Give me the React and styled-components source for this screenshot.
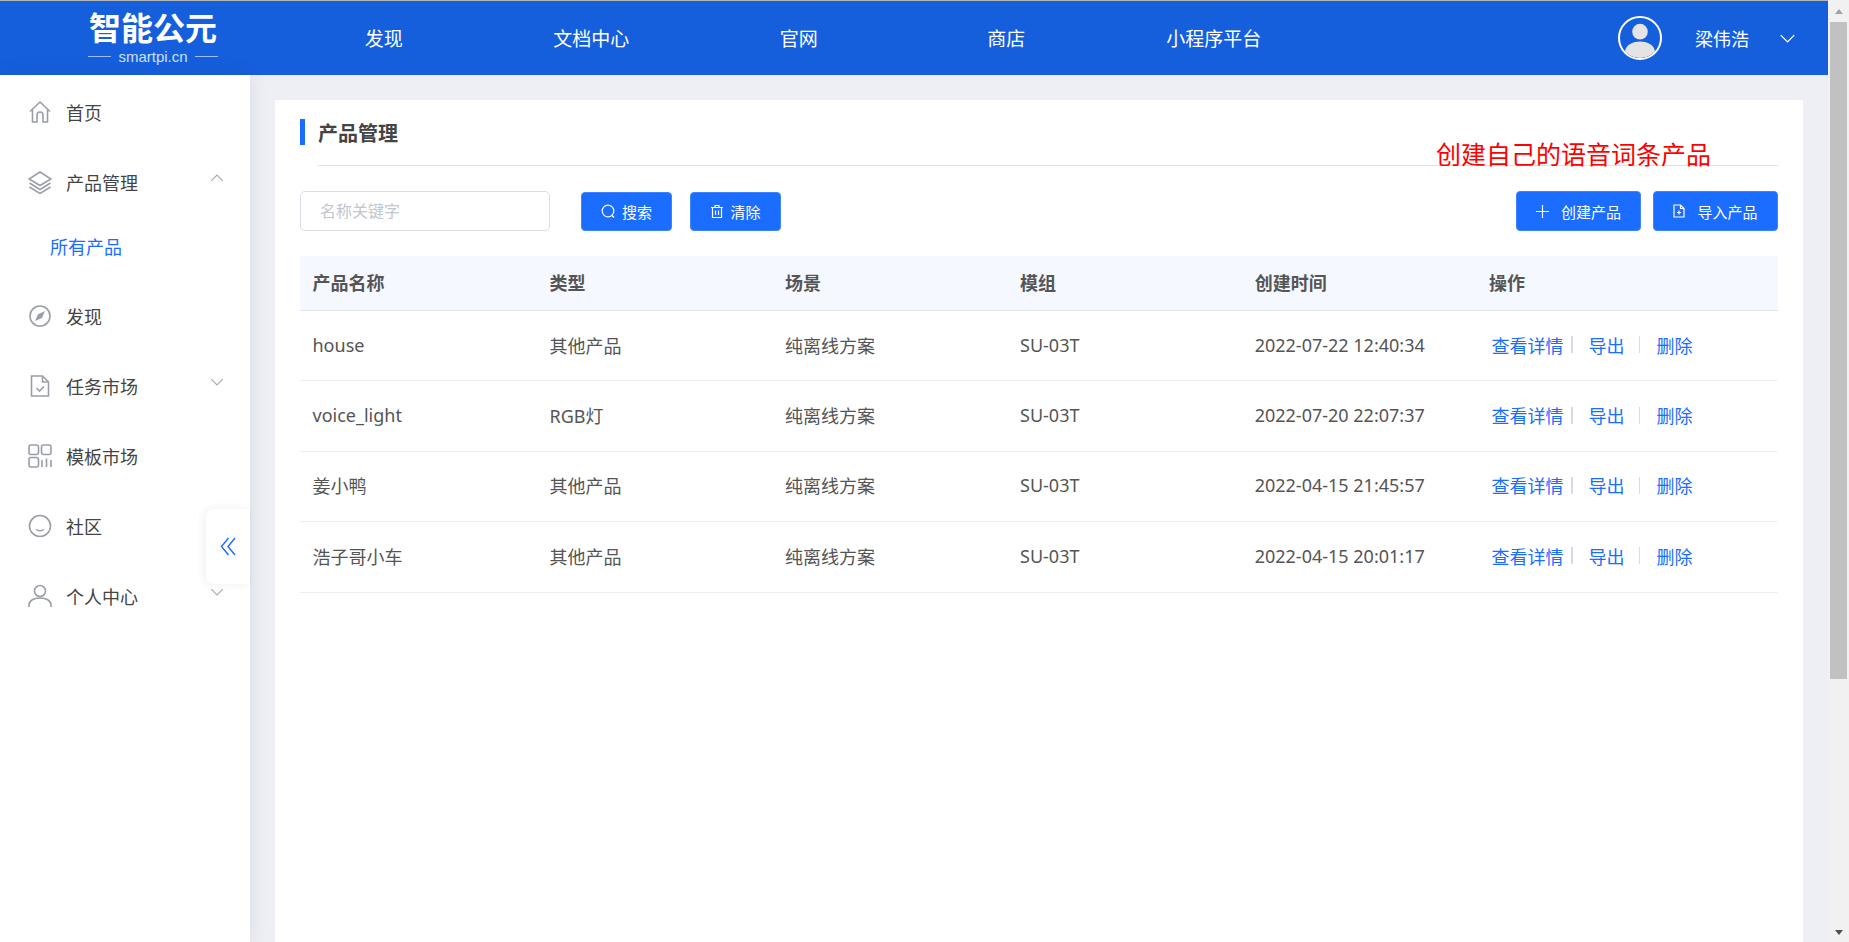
import React from "react";
import styled, { createGlobalStyle } from "styled-components";

const GlobalStyle = createGlobalStyle`
    html, body {
        margin: 0;
        height: 100%;
        overflow: hidden;
        background: #eeeff5;
        font-family: "Noto Sans", "Noto Sans CJK SC", "Liberation Sans", sans-serif;
    }
    #root { height: 100%; }
    * { box-sizing: border-box; }
`;

const navItems = ["发现", "文档中心", "官网", "商店", "小程序平台"];

const rows = [
    { name: "house", type: "其他产品", time: "2022-07-22 12:40:34" },
    { name: "voice_light", type: "RGB灯", time: "2022-07-20 22:07:37" },
    { name: "姜小鸭", type: "其他产品", time: "2022-04-15 21:45:57" },
    { name: "浩子哥小车", type: "其他产品", time: "2022-04-15 20:01:17" },
];

const columns = ["产品名称", "类型", "场景", "模组", "创建时间", "操作"];

// sidebar icons
const HomeIcon = () => (
    <svg width="24" height="24" viewBox="0 0 24 24" fill="none" stroke="#9a9ea8" strokeWidth="1.6">
        <path d="M2 11.5 12 2l10 9.5" />
        <path d="M4.5 9.5V22h4.5v-7a3 3 0 0 1 6 0v7h4.5V9.5" />
    </svg>
);
const LayersIcon = () => (
    <svg width="24" height="24" viewBox="0 0 24 24" fill="none" stroke="#9a9ea8" strokeWidth="1.6">
        <path d="M12 2 23 9l-11 6.5L1 9z" />
        <path d="M1.5 13 12 19.5 22.5 13" />
        <path d="M1.5 17 12 23.5 22.5 17" />
    </svg>
);
const CompassIcon = () => (
    <svg width="24" height="24" viewBox="0 0 24 24" fill="none" stroke="#9a9ea8" strokeWidth="1.6">
        <circle cx="12" cy="12" r="10" />
        <path d="M17 7l-7 3.2L7 17l7-3z" fill="#9a9ea8" stroke="none" />
    </svg>
);
const TaskIcon = () => (
    <svg width="24" height="24" viewBox="0 0 24 24" fill="none" stroke="#9a9ea8" strokeWidth="1.6">
        <path d="M3.5 2h11l6 6v14h-17z" />
        <path d="M14.5 2v6h6" />
        <path d="M8.5 14l3 3 4.5-4.5" />
    </svg>
);
const TemplateIcon = () => (
    <svg width="24" height="24" viewBox="0 0 24 24" fill="none" stroke="#9a9ea8" strokeWidth="1.6">
        <rect x="1" y="1" width="9.5" height="9.5" rx="2" />
        <rect x="13.5" y="1" width="9.5" height="9.5" rx="2" />
        <rect x="1" y="13.5" width="9.5" height="9.5" rx="2" />
        <path d="M14 16v7M18.5 14.5V23M23 16v7" />
    </svg>
);
const SmileIcon = () => (
    <svg width="24" height="24" viewBox="0 0 24 24" fill="none" stroke="#9a9ea8" strokeWidth="1.6">
        <circle cx="12" cy="12" r="10.5" />
        <path d="M8 15.5c2 1.6 6 1.6 8 0" />
    </svg>
);
const UserIcon = () => (
    <svg width="24" height="24" viewBox="0 0 24 24" fill="none" stroke="#9a9ea8" strokeWidth="1.6">
        <circle cx="12" cy="7" r="5.5" />
        <path d="M1 23v-2c0-4 4-7 11-7s11 3 11 7v2" />
    </svg>
);

const Chevron = ({ up, color = "#a6a9b2", size = 16 }) => (
    <svg width={size} height={size} viewBox="0 0 14 14" fill="none" stroke={color} strokeWidth="1">
        <path d={up ? "M2 9.5l5-5 5 5" : "M2 4.5l5 5 5-5"} />
    </svg>
);

const menu = [
    { label: "首页", icon: <HomeIcon /> },
    { label: "产品管理", icon: <LayersIcon />, arrow: "up" },
    { label: "所有产品", sub: true },
    { label: "发现", icon: <CompassIcon /> },
    { label: "任务市场", icon: <TaskIcon />, arrow: "down" },
    { label: "模板市场", icon: <TemplateIcon /> },
    { label: "社区", icon: <SmileIcon /> },
    { label: "个人中心", icon: <UserIcon />, arrow: "down" },
];

export default function App() {
    return (
        <Root>
            <GlobalStyle />
            <Page>
                <Header>
                    <Logo>
                        <LogoTitle>智能公元</LogoTitle>
                        <LogoSub>smartpi.cn</LogoSub>
                    </Logo>
                    <Nav>
                        {navItems.map((item) => (
                            <NavItem key={item}>{item}</NavItem>
                        ))}
                    </Nav>
                    <UserBox>
                        <Avatar>
                            <svg width="40" height="40" viewBox="0 0 41 41">
                                <circle cx="20.5" cy="14" r="8" fill="#e4e4e4" />
                                <path d="M5 36c0-8 7-12 15.500-12S36 28 36 36c-4 3-9 5-15.500 5S9 39 5 36z" fill="#e4e4e4" />
                            </svg>
                        </Avatar>
                        <UserName>梁伟浩</UserName>
                        <Chevron color="#ffffff" size={19} />
                    </UserBox>
                </Header>
                <Body>
                    <Sidebar>
                        {menu.map((item) =>
                            item.sub ? (
                                <SubItem key={item.label}>{item.label}</SubItem>
                            ) : (
                                <MenuItem key={item.label}>
                                    <MenuIcon>{item.icon}</MenuIcon>
                                    <MenuLabel>{item.label}</MenuLabel>
                                    {item.arrow && (
                                        <MenuArrow>
                                            <Chevron up={item.arrow === "up"} />
                                        </MenuArrow>
                                    )}
                                </MenuItem>
                            )
                        )}
                        <CollapseTab>
                            <svg width="16" height="19" viewBox="0 0 16 19" fill="none" stroke="#1a6dff" strokeWidth="1.4">
                                <path d="M8.500 1 1.500 9.500 8.500 18M15 1 8 9.500 15 18" />
                            </svg>
                        </CollapseTab>
                    </Sidebar>
                    <Main>
                        <Card>
                            <TitleRow>
                                <TitleBar />
                                <Title>产品管理</Title>
                            </TitleRow>
                            <Divider />
                            <Annotation>创建自己的语音词条产品</Annotation>
                            <Toolbar>
                                <SearchInput placeholder="名称关键字" />
                                <SmallButton>
                                    <svg width="15" height="15" viewBox="0 0 15 15" fill="none" stroke="#fff" strokeWidth="1.2">
                                        <circle cx="7" cy="7" r="5.800" />
                                        <path d="M11 11.500l2 2" />
                                    </svg>
                                    搜索
                                </SmallButton>
                                <SmallButton>
                                    <svg width="14" height="15" viewBox="0 0 14 15" fill="none" stroke="#fff" strokeWidth="1.2">
                                        <path d="M1 3.500h12M5 3.500V1.500h4v2M2.500 3.500v10h9v-10M5.500 6.500v4.500M8.500 6.500v4.500" />
                                    </svg>
                                    清除
                                </SmallButton>
                                <ToolbarRight>
                                    <WideButton>
                                        <svg width="13" height="13" viewBox="0 0 13 13" fill="none" stroke="#fff" strokeWidth="1.2">
                                            <path d="M6.500 0v13M0 6.500h13" />
                                        </svg>
                                        创建产品
                                    </WideButton>
                                    <WideButton>
                                        <svg width="12" height="14" viewBox="0 0 12 14" fill="none" stroke="#fff" strokeWidth="1.200">
                                            <path d="M1 1h6.500L11 4.500V13H1z" />
                                            <path d="M7.500 1v3.500H11" />
                                            <path d="M6 6.500v4M4 8.500h4" />
                                        </svg>
                                        导入产品
                                    </WideButton>
                                </ToolbarRight>
                            </Toolbar>
                            <Table>
                                <HeadRow>
                                    {columns.map((col) => (
                                        <HeadCell key={col}>{col}</HeadCell>
                                    ))}
                                </HeadRow>
                                {rows.map((row) => (
                                    <Row key={row.name}>
                                        <Cell>{row.name}</Cell>
                                        <Cell>{row.type}</Cell>
                                        <Cell>纯离线方案</Cell>
                                        <Cell>SU-03T</Cell>
                                        <Cell>{row.time}</Cell>
                                        <Actions>
                                            <ActionLink>查看详情</ActionLink>
                                            <ActionSep $wide />
                                            <ActionLink>导出</ActionLink>
                                            <ActionSep />
                                            <ActionLink>删除</ActionLink>
                                        </Actions>
                                    </Row>
                                ))}
                            </Table>
                        </Card>
                    </Main>
                </Body>
            </Page>
            <ScrollTrack>
                <ScrollArrow $up />
                <ScrollThumb />
                <ScrollArrow />
            </ScrollTrack>
        </Root>
    );
}

const Root = styled.div`
    display: flex;
    height: 100%;
`;

const Page = styled.div`
    flex: 1;
    min-width: 0;
    display: flex;
    flex-direction: column;
    height: 100%;
    border-top: 1px solid #b4b4b4;
`;

const Header = styled.header`
    flex: none;
    display: flex;
    align-items: center;
    height: 74px;
    background: #155fdd;
    color: #fff;
`;

const Logo = styled.div`
    width: 280px;
    flex: none;
    display: flex;
    flex-direction: column;
    align-items: center;
    padding-left: 26px;
    font-family: "Liberation Sans", "Noto Sans CJK SC", sans-serif;
`;

const LogoTitle = styled.div`
    font-size: 32px;
    font-weight: 700;
    line-height: 37px;
`;

const LogoSub = styled.div`
    display: flex;
    align-items: center;
    gap: 7px;
    font-size: 15px;
    line-height: 17px;
    width: 130px;
    color: #cfe0fb;

    &::before,
    &::after {
        content: "";
        flex: 1;
        height: 1px;
        background: #9dbdf2;
    }
`;

const Nav = styled.nav`
    display: flex;
`;

const NavItem = styled.div`
    width: 207.5px;
    text-align: center;
    font-size: 19px;
`;

const UserBox = styled.div`
    margin-left: auto;
    display: flex;
    align-items: center;
    padding-right: 31px;
`;

const Avatar = styled.div`
    width: 44px;
    height: 44px;
    border: 2px solid #fff;
    border-radius: 50%;
    overflow: hidden;
    display: flex;
`;

const UserName = styled.div`
    font-size: 18px;
    margin: 0 29px 0 33px;
`;

const Body = styled.div`
    flex: 1;
    min-height: 0;
    display: flex;
`;

const Sidebar = styled.aside`
    position: relative;
    z-index: 1;
    flex: none;
    width: 250px;
    background: #fff;
    padding-top: 2px;
    box-shadow: 0 0 18px rgba(40, 50, 90, 0.1);
`;

const MenuItem = styled.div`
    display: flex;
    align-items: center;
    height: 70px;
    padding: 0 25px 0 28px;
`;

const MenuIcon = styled.span`
    display: flex;
    width: 24px;
    height: 24px;
    margin-right: 14px;
`;

const MenuLabel = styled.span`
    flex: 1;
    font-size: 18px;
    color: #444;
`;

const MenuArrow = styled.span`
    display: flex;
    margin-bottom: 8px;
`;

const SubItem = styled.div`
    height: 60px;
    margin-bottom: 4px;
    padding-left: 50px;
    line-height: 60px;
    font-size: 18px;
    color: #1a6dff;
`;

const CollapseTab = styled.div`
    position: absolute;
    top: 434px;
    left: 206px;
    width: 44px;
    height: 75px;
    display: flex;
    align-items: center;
    justify-content: center;
    background: #fff;
    border-radius: 8px 0 0 8px;
    box-shadow: -2px 0 8px rgba(40, 50, 90, 0.08);
`;

const Main = styled.main`
    flex: 1;
    min-width: 0;
    padding: 25px 25px 0;
    display: flex;
`;

const Card = styled.section`
    position: relative;
    flex: 1;
    min-width: 0;
    background: #fff;
    padding: 19px 25px 0;
`;

const TitleRow = styled.div`
    display: flex;
    align-items: center;
    height: 26px;
`;

const TitleBar = styled.span`
    width: 5px;
    height: 26px;
    background: #1a6dff;
    margin-right: 13px;
`;

const Title = styled.h2`
    margin: 0;
    font-size: 20px;
    font-weight: 700;
    color: #444;
`;

const Divider = styled.div`
    height: 1px;
    margin: 20px 0 0 18px;
    background: #dfe0e8;
`;

const Annotation = styled.div`
    position: absolute;
    top: 36px;
    right: 92px;
    font-size: 25px;
    line-height: 36px;
    color: #ff0000;
`;

const Toolbar = styled.div`
    display: flex;
    align-items: center;
    height: 40px;
    margin-top: 25px;
`;

const SearchInput = styled.input`
    width: 250px;
    height: 40px;
    padding: 0 19px;
    border: 1px solid #dcdee6;
    border-radius: 5px;
    outline: none;
    font-family: inherit;
    font-size: 16px;
    margin-right: 31px;

    &::placeholder {
        color: #c3c6ce;
    }
`;

const Button = styled.button`
    display: flex;
    align-items: center;
    justify-content: center;
    height: 39px;
    padding: 0;
    border: 1px solid #3d83ff;
    border-radius: 4px;
    background: #1a6dff;
    color: #fff;
    font-family: inherit;
    font-size: 15px;
`;

const SmallButton = styled(Button)`
    width: 91px;
    gap: 6px;
    margin-right: 18px;
`;

const ToolbarRight = styled.div`
    margin-left: auto;
    display: flex;
    gap: 12px;
`;

const WideButton = styled(Button)`
    width: 125px;
    height: 40px;
    gap: 12px;
`;

const Table = styled.div`
    margin-top: 25px;
`;

const gridColumns = "237px 235.5px 235px 234.7px 234.3px 1fr";

const HeadRow = styled.div`
    display: grid;
    grid-template-columns: ${gridColumns};
    align-items: center;
    height: 55px;
    padding-bottom: 2px;
    background: #f5f8fe;
    border-bottom: 1px solid #e2e4ea;
`;

const HeadCell = styled.div`
    padding-left: 12.5px;
    font-size: 18px;
    font-weight: 700;
    color: #555;
`;

const Row = styled.div`
    display: grid;
    grid-template-columns: ${gridColumns};
    align-items: center;
    height: 70.4px;
    padding-bottom: 2px;
    border-bottom: 1px solid #eeeff4;
`;

const Cell = styled.div`
    padding-left: 12.5px;
    font-size: 18px;
    color: #555;
`;

const Actions = styled.div`
    display: flex;
    align-items: center;
    padding-left: 15px;
`;

const ActionLink = styled.span`
    font-size: 18px;
    color: #1a6dff;
`;

const ActionSep = styled.span`
    width: ${(p) => (p.$wide ? "2px" : "1px")};
    height: 17px;
    margin: 0 ${(p) => (p.$wide ? "15px" : "16px")} 0 ${(p) => (p.$wide ? "8px" : "15px")};
    background: #d8dae8;
`;

const ScrollTrack = styled.div`
    flex: none;
    width: 21px;
    height: 100%;
    display: flex;
    flex-direction: column;
    align-items: center;
    background: #f1f1f1;
`;

const ScrollArrow = styled.div`
    flex: none;
    width: 0;
    height: 0;
    margin: ${(p) => (p.$up ? "9px 0 8px" : "auto 0 7px")};
    border-left: 4.5px solid transparent;
    border-right: 4.5px solid transparent;
    border-bottom: ${(p) => (p.$up ? "5px solid #a3a3a3" : "none")};
    border-top: ${(p) => (p.$up ? "none" : "5px solid #505050")};
`;

const ScrollThumb = styled.div`
    flex: none;
    width: 17px;
    height: 657px;
    background: #c1c1c1;
`;
